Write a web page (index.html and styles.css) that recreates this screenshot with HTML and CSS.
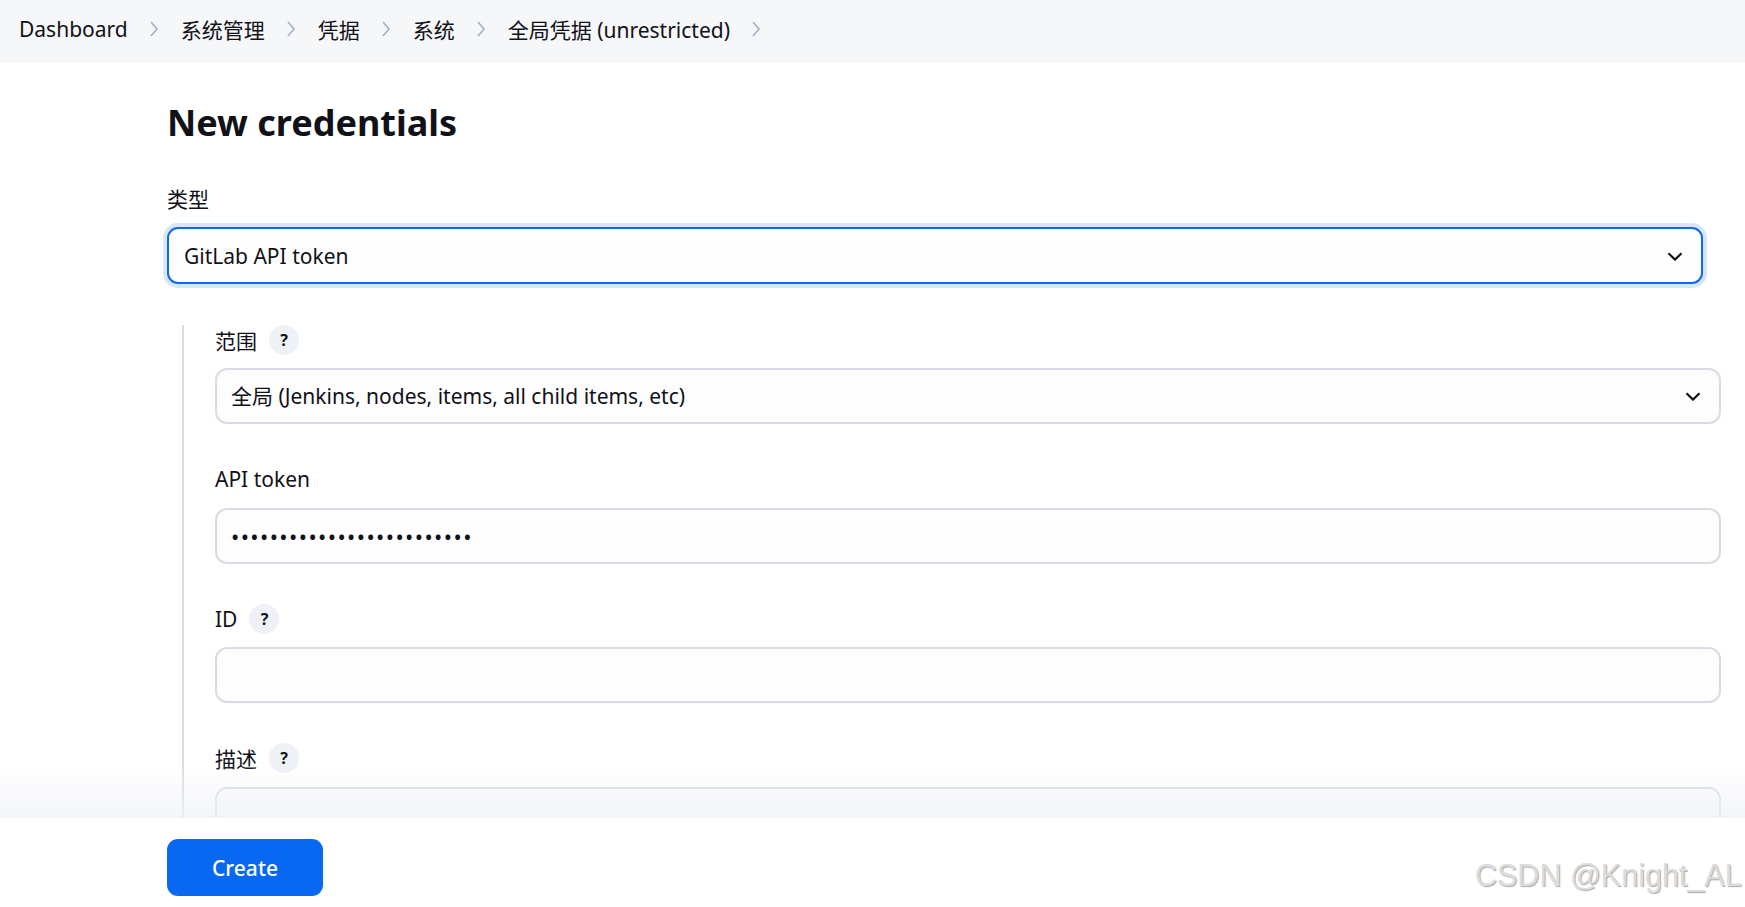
FILE: index.html
```html
<!DOCTYPE html>
<html lang="zh-CN">
  <head>
    <meta charset="UTF-8" />
    <meta name="viewport" content="width=device-width, initial-scale=1.0" />
    <title>New credentials [Jenkins]</title>
    <link rel="stylesheet" href="styles.css">
  </head>
  <body>
    <nav class="breadcrumbs">
      <ol>
        <li><a href="#">Dashboard</a><svg class="crumb-sep" viewBox="0 0 10 18"><path d="M2 2 L8 9 L2 16" /></svg></li>
        <li><a href="#">系统管理</a><svg class="crumb-sep" viewBox="0 0 10 18"><path d="M2 2 L8 9 L2 16" /></svg></li>
        <li><a href="#">凭据</a><svg class="crumb-sep" viewBox="0 0 10 18"><path d="M2 2 L8 9 L2 16" /></svg></li>
        <li><a href="#">系统</a><svg class="crumb-sep" viewBox="0 0 10 18"><path d="M2 2 L8 9 L2 16" /></svg></li>
        <li><a href="#">全局凭据 (unrestricted)</a><svg class="crumb-sep" viewBox="0 0 10 18"><path d="M2 2 L8 9 L2 16" /></svg></li>
      </ol>
    </nav>

    <main class="page">
      <h1>New credentials</h1>

      <form class="credentials-form">
        <div class="field">
          <label class="field-label plain" for="kind">类型</label>
          <div class="select-wrap">
            <select id="kind" class="control control-focus">
              <option>GitLab API token</option>
            </select>
            <svg class="select-arrow" viewBox="0 0 16 9"><path d="M1.5 1.3 L8 7.6 L14.5 1.3" /></svg>
          </div>
        </div>

        <div class="nested">
          <div class="field">
            <div class="field-label">
              <label for="scope">范围</label>
              <span class="help">?</span>
            </div>
            <div class="select-wrap">
              <select id="scope" class="control">
                <option>全局 (Jenkins, nodes, items, all child items, etc)</option>
              </select>
              <svg class="select-arrow" viewBox="0 0 16 9"><path d="M1.5 1.3 L8 7.6 L14.5 1.3" /></svg>
            </div>
          </div>

          <div class="field">
            <div class="field-label">
              <label for="token">API token</label>
            </div>
            <input id="token" class="control password" type="password" value="glpat-xxxxxxxxxxxxxxxxxxx" />
          </div>

          <div class="field">
            <div class="field-label">
              <label for="credId">ID</label>
              <span class="help">?</span>
            </div>
            <input id="credId" class="control" type="text" />
          </div>

          <div class="field last">
            <div class="field-label">
              <label for="description">描述</label>
              <span class="help">?</span>
            </div>
            <textarea id="description" class="control textarea"></textarea>
          </div>
        </div>
      </form>
    </main>

    <div class="bottom-bar">
      <button class="primary-button" type="button">Create</button>
      <span class="watermark">CSDN @Knight_AL</span>
    </div>
  </body>
</html>
```

FILE: styles.css
```css
body {
  font-family: "Noto Sans", "Noto Sans CJK SC", sans-serif;
  margin: 0;
  color: #111118;
  background-color: #fff;
  overflow: hidden;
}
.breadcrumbs {
  height: 63px;
  background-color: #f6f7f9;
  display: flex;
  align-items: center;
  padding-left: 19px;
  padding-bottom: 6px;
  box-sizing: border-box;
}
.breadcrumbs ol {
  list-style: none;
  margin: 0;
  padding: 0;
  display: flex;
  align-items: center;
}
.breadcrumbs li {
  display: flex;
  align-items: center;
  font-size: 21px;
}
.breadcrumbs a {
  color: #111118;
  text-decoration: none;
}
.crumb-sep {
  width: 10px;
  height: 18px;
  margin: 0 22px 0 21px;
  fill: none;
  stroke: #a3b2cb;
  stroke-width: 1.7;
}
.page {
  padding: 38px 42px 0 167px;
}
h1 {
  font-size: 36px;
  line-height: 44px;
  font-weight: 700;
  margin: 0 0 40px;
}
.field {
  margin-bottom: 40.5px;
}
.field.last {
  margin-bottom: 0;
}
.field-label {
  display: flex;
  align-items: center;
  gap: 12px;
  height: 29px;
  margin-bottom: 14px;
  font-size: 21px;
}
.field-label.plain {
  height: 28px;
  line-height: 28px;
}
.help {
  width: 30px;
  height: 30px;
  border-radius: 50%;
  background-color: #eef1f6;
  display: flex;
  align-items: center;
  justify-content: center;
  font-size: 16px;
  font-weight: 700;
}
.select-wrap {
  position: relative;
}
.control {
  display: block;
  width: 100%;
  height: 56px;
  box-sizing: border-box;
  border: 2px solid #d8dce7;
  border-radius: 12px;
  background-color: #fdfdfe;
  padding: 0 14px;
  font-family: "Noto Sans", "Noto Sans CJK SC", sans-serif;
  font-size: 21px;
  color: #111118;
  appearance: none;
  outline: none;
}
.control-focus {
  height: 57px;
  padding-left: 15px;
  border-color: #0b6aee;
  border-radius: 11px;
  box-shadow: 0 0 0 4px #d8e6fb;
}
.select-arrow {
  position: absolute;
  right: 20px;
  top: 50%;
  width: 16px;
  height: 9px;
  margin-top: -4px;
  fill: none;
  stroke: #111118;
  stroke-width: 2.2;
  pointer-events: none;
}
.password {
  letter-spacing: 1.4px;
  font-size: 22px;
}
.textarea {
  height: 100px;
  resize: none;
}
.nested {
  margin: 41px -18px 0 15px;
  border-left: 2px solid #d9dde7;
  padding-left: 31px;
}
.bottom-bar {
  position: fixed;
  left: 0;
  right: 0;
  bottom: 0;
  height: 89px;
  box-sizing: border-box;
  padding: 21px 0 0 167px;
  background-color: #fff;
}
.bottom-bar::before {
  content: "";
  position: absolute;
  left: 0;
  right: 0;
  bottom: 100%;
  height: 55px;
  background: linear-gradient(to bottom, rgba(240, 242, 246, 0), rgba(240, 242, 246, 0.75));
  pointer-events: none;
}
.primary-button {
  width: 156px;
  height: 57px;
  border: none;
  border-radius: 11px;
  background-color: #0868f2;
  color: #fff;
  font-family: "Noto Sans", sans-serif;
  font-size: 21px;
  font-weight: 500;
  cursor: pointer;
}
.watermark {
  position: absolute;
  left: 1475px;
  top: 39px;
  font-family: "Liberation Sans", Arial, sans-serif;
  font-size: 30.5px;
  line-height: 36px;
  color: #dcdcdc;
  text-shadow: 1px 1px 1px #a9a9a9;
  white-space: nowrap;
}
```
